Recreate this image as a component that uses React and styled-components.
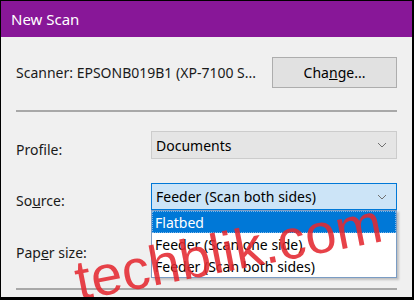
import styled, { createGlobalStyle } from "styled-components";

const GlobalStyle = createGlobalStyle`
  html, body {
    margin: 0;
    padding: 0;
    background: #f0f0f0;
  }
  * {
    box-sizing: border-box;
  }
`;

const sources = ["Flatbed", "Feeder (Scan one side)", "Feeder (Scan both sides)"];

function Chevron() {
  return (
    <svg width="10" height="6" viewBox="0 0 10 6">
      <path d="M1 1 L5 5 L9 1" fill="none" stroke="#707070" strokeWidth="1" />
    </svg>
  );
}

function App() {
  return (
    <>
      <GlobalStyle />
      <Window>
        <TitleBar>New Scan</TitleBar>
        <Content>
          <ScannerRow>
            <Label>Scanner: EPSONB019B1 (XP-7100 S...</Label>
            <Button>
              Cha<u>n</u>ge...
            </Button>
          </ScannerRow>
          <Divider />
          <FieldRow>
            <FieldLabel>
              Prof<u>i</u>le:
            </FieldLabel>
            <Select>
              <span>Documents</span>
              <Chevron />
            </Select>
          </FieldRow>
          <FieldRow $gap={24}>
            <FieldLabel>
              So<u>u</u>rce:
            </FieldLabel>
            <SelectWrap>
              <Select $open>
                <span>Feeder (Scan both sides)</span>
                <Chevron />
              </Select>
              <DropList>
                {sources.map((s, i) => (
                  <Option key={s} $active={i === 0}>
                    {s}
                  </Option>
                ))}
              </DropList>
            </SelectWrap>
          </FieldRow>
          <FieldRow $gap={24}>
            <FieldLabel>
              Pap<u>e</u>r size:
            </FieldLabel>
            <Placeholder />
          </FieldRow>
          <Divider $top={26} />
        </Content>
        <Watermark>techblik.com</Watermark>
      </Window>
    </>
  );
}

const Window = styled.div`
  position: relative;
  width: 414px;
  height: 300px;
  overflow: hidden;
  border: 1px solid #000;
  border-bottom-width: 3px;
  border-right-width: 2px;
  background: #f0f0f0;
  font-family: "Noto Sans", "Open Sans", sans-serif;
  font-size: 14px;
  color: #000;
`;

const TitleBar = styled.div`
  height: 36px;
  display: flex;
  align-items: center;
  padding-left: 10px;
  background: #881798;
  color: #fff;
  font-size: 15px;
`;

const Content = styled.div`
  padding: 0 15px;
`;

const ScannerRow = styled.div`
  display: flex;
  align-items: center;
  justify-content: space-between;
  margin-top: 20px;
`;

const Label = styled.span`
  white-space: nowrap;
  color: #1a1a1a;
`;

const Button = styled.div`
  width: 125px;
  height: 31px;
  display: flex;
  align-items: center;
  justify-content: center;
  background: #e1e1e1;
  border: 1px solid #adadad;
  u {
    text-decoration-thickness: 1px;
  }
`;

const Divider = styled.div`
  height: 2px;
  margin-top: ${({ $top }) => $top || 22}px;
  background: #a8a8a8;
`;

const FieldRow = styled.div`
  display: flex;
  align-items: center;
  margin-top: ${({ $gap }) => $gap || 19}px;
`;

const FieldLabel = styled.span`
  width: 135px;
  flex-shrink: 0;
  padding-top: 8px;
  color: #1a1a1a;
`;

const SelectWrap = styled.div`
  position: relative;
  flex: 1;
`;

const Select = styled.div`
  flex: 1;
  height: ${({ $open }) => ($open ? 27 : 28)}px;
  display: flex;
  align-items: center;
  justify-content: space-between;
  padding: 0 9px 0 4px;
  background: ${({ $open }) => ($open ? "#cce4f7" : "#e5e5e5")};
  border: 1px solid ${({ $open }) => ($open ? "#0078d7" : "#cccccc")};
`;

const Placeholder = styled.div`
  flex: 1;
  height: 28px;
`;

const DropList = styled.div`
  position: absolute;
  top: 100%;
  left: 0;
  right: 0;
  background: #fff;
  border: 1px solid #7a9cc4;
  box-shadow: 2px 2px 2px rgba(0, 0, 0, 0.2);
  z-index: 2;
`;

const Option = styled.div`
  height: 22px;
  display: flex;
  align-items: center;
  padding-left: 3px;
  background: ${({ $active }) => ($active ? "#0078d7" : "#fff")};
  color: ${({ $active }) => ($active ? "#fff" : "#000")};
  outline: ${({ $active }) => ($active ? "1px dotted #7fb7e8" : "none")};
  outline-offset: -1px;
`;

const Watermark = styled.div`
  position: absolute;
  left: 80px;
  top: 252px;
  font-family: "Liberation Sans", Arial, sans-serif;
  font-size: 56px;
  line-height: 1;
  color: rgba(228, 40, 48, 0.88);
  transform: rotate(-11deg);
  transform-origin: left bottom;
  z-index: 5;
  pointer-events: none;
  white-space: nowrap;
`;

export default App;
